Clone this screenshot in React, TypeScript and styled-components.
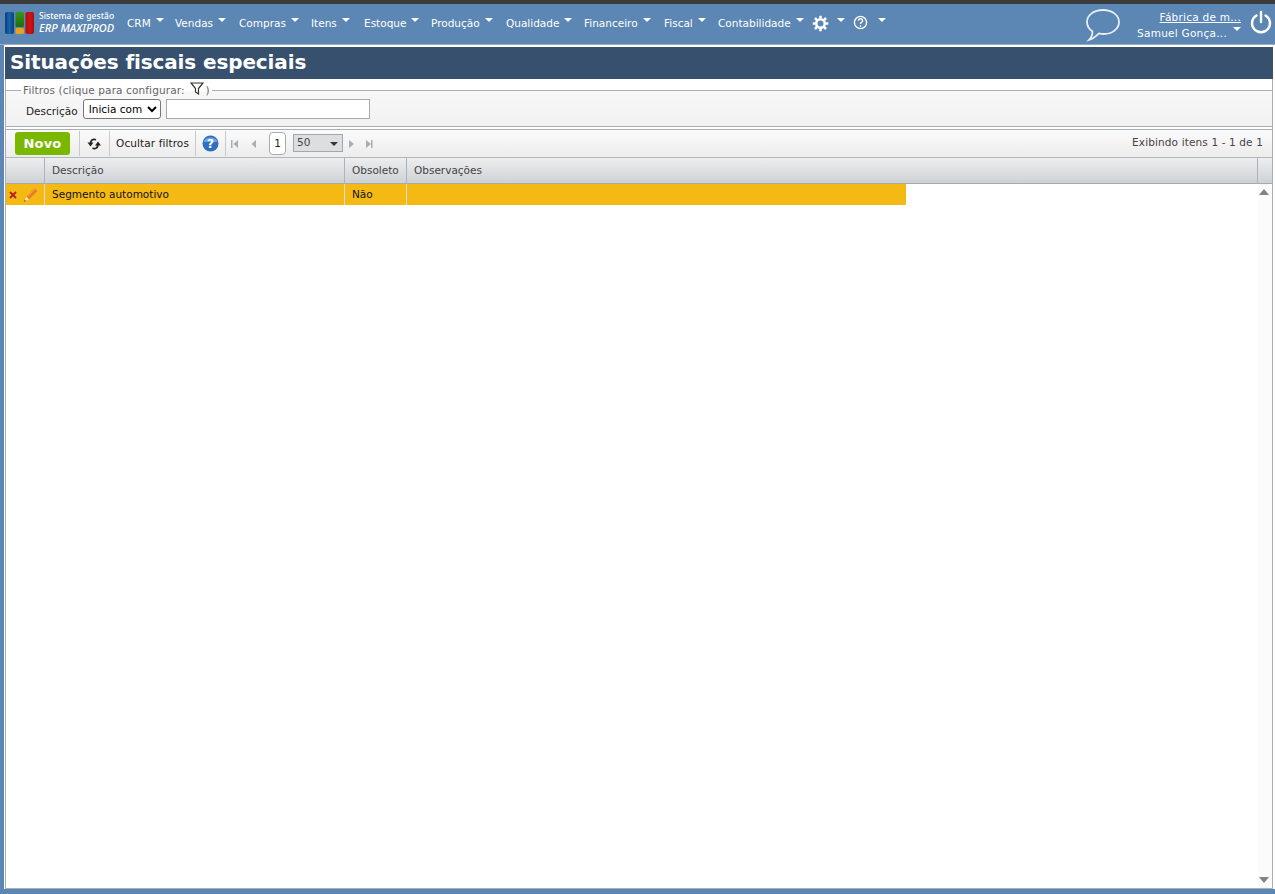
import React from "react";
import styled, { createGlobalStyle } from "styled-components";

const Global = createGlobalStyle`
  html, body { margin: 0; padding: 0; height: 100%; overflow: hidden; }
  body { background: #5c86b3; font-family: "DejaVu Sans", Verdana, sans-serif; font-size: 10.5px; color: #222; }
  #root { height: 100%; }
`;

const Page = styled.div`
  height: 894px;
  display: flex;
  flex-direction: column;
  border-top: 4px solid #3b3b3b;
  box-sizing: border-box;
`;
const NavBar = styled.header`
  height: 41px;
  box-sizing: border-box;
  border-bottom: 1px solid #a3acb5;
  flex: none;
  display: flex;
  align-items: flex-start;
  color: #fff;
  padding-left: 5px;
  position: relative;
`;
const Logo = styled.div`
  width: 122px;
  flex: none;
  display: flex;
  gap: 5px;
  padding-top: 7px;
`;
const LogoText = styled.div`
  display: flex;
  flex-direction: column;
  font-family: "Noto Sans", sans-serif;
  font-size: 8.6px;
  line-height: 12px;
  font-weight: 500;
  white-space: nowrap;
  margin-top: -1px;
  em { font-size: 11px; font-weight: 500; font-style: italic; }
`;
const Menu = styled.nav`
  display: flex;
  align-items: flex-start;
  padding-top: 12px;
`;
const MenuItem = styled.div<{ $w: number }>`
  width: ${(p) => p.$w}px;
  display: flex;
  flex: none;
  height: 14px;
  line-height: 14px;
  position: relative;
  white-space: nowrap;
`;
const Caret = styled.span<{ $x?: number }>`
  display: inline-block;
  width: 0;
  height: 0;
  border-left: 4.5px solid transparent;
  border-right: 4.5px solid transparent;
  border-top: 4.5px solid #fff;
  margin: 2px 0 0 ${(p) => p.$x ?? 5}px;
`;
const IconSlot = styled.span`
  display: inline-flex;
  width: 17px;
  height: 17px;
  margin-top: -1px;
`;
const UserBox = styled.div`
  position: absolute;
  top: 5px;
  right: 34px;
  width: 110px;
  text-align: right;
  line-height: 16px;
  letter-spacing: 0.25px;
  a { color: #fff; text-decoration: underline; display: block; }
`;
const UserLine = styled.div`
  display: flex;
  justify-content: flex-end;
  align-items: flex-start;
`;
const Chat = styled.svg`
  position: absolute;
  left: 1085px;
  top: 4px;
`;
const Power = styled.svg`
  position: absolute;
  left: 1250px;
  top: 6px;
`;
const Panel = styled.main`
  flex: 1;
  margin: 0 0 5px 4px;
  background: #fff;
  border-left: 1px solid #fff;
  border-top: 2px solid #fff;
  padding-right: 2px;
  display: flex;
  flex-direction: column;
  min-height: 0;
`;
const Title = styled.h1`
  margin: 0;
  height: 32px;
  line-height: 31px;
  background: #37506e;
  color: #fff;
  font-size: 20px;
  font-weight: 700;
  letter-spacing: -0.12px;
  padding-left: 5px;
  flex: none;
`;
const Content = styled.div`
  flex: 1;
  min-height: 0;
  display: flex;
  flex-direction: column;
  border-left: 1px solid #a9b0b5;
  border-bottom: 1px solid #a9b0b5;
  border-right: 1px solid #a9b0b5;
`;
const FilterWrap = styled.div`
  height: 50px;
  flex: none;
  box-sizing: border-box;
  padding-top: 5px;
`;
const Fieldset = styled.fieldset`
  margin: 0;
  height: 43px;
  box-sizing: border-box;
  border: none;
  border-top: 1px solid #a9b0b5;
  border-bottom: 1px solid #a9b0b5;
  padding: 0 0 0 20px;
  background: linear-gradient(#f8f8f8, #f1f1f1);
  display: flex;
  align-items: center;
  legend {
    margin-left: -5px;
    padding: 0 2px;
    color: #666;
    line-height: 12px;
    height: 12px;
    display: flex;
    align-items: center;
    white-space: nowrap;
    letter-spacing: 0.12px;
  }
  legend svg { margin: -3px 2px 0 5px; }
`;
const FilterRow = styled.div`
  display: flex;
  align-items: center;
  margin-top: -4px;
`;
const Label = styled.label`
  color: #222;
  margin: 3px 5px 0 0;
`;
const Select = styled.select`
  width: 78px;
  height: 20px;
  font: 10.5px "DejaVu Sans", sans-serif;
  background: #fff;
  border: 1px solid #767676;
  border-radius: 3px;
  color: #000;
  padding: 0 0 0 1px;
  margin-right: 5px;
`;
const TextInput = styled.input`
  width: 204px;
  height: 20px;
  box-sizing: border-box;
  border: 1px solid #a9a9a9;
  background: #fff;
`;
const Toolbar = styled.div`
  height: 28px;
  flex: none;
  box-sizing: border-box;
  border-top: 1px solid #a9b0b5;
  background: linear-gradient(#fbfbfb, #ececec);
  display: flex;
  align-items: center;
  padding-left: 9px;
  position: relative;
`;
const NewButton = styled.button`
  width: 55px;
  height: 23px;
  padding: 0;
  border: none;
  border-radius: 3px;
  background: #7ab800;
  color: #fff;
  font: 700 13px "DejaVu Sans", sans-serif;
  letter-spacing: 0.2px;
  margin-right: 9px;
`;
const Sep = styled.span`
  width: 1px;
  height: 25px;
  background: #c6cacd;
  flex: none;
`;
const ToolCell = styled.span<{ $w: number }>`
  width: ${(p) => p.$w}px;
  display: flex;
  align-items: center;
  justify-content: center;
  flex: none;
  white-space: nowrap;
  color: #222;
`;
const ToolText = styled.span`
  margin-top: -1px;
  letter-spacing: 0.1px;
`;
const PageBox = styled.span`
  width: 15px;
  height: 21px;
  border: 1px solid #aaa;
  border-radius: 4px;
  background: #fff;
  text-align: center;
  line-height: 21px;
  margin: 0 7px 0 12px;
  flex: none;
`;
const PageSize = styled.span`
  width: 50px;
  height: 18px;
  box-sizing: border-box;
  border: 1px solid #a3a8ac;
  background: #dcdfe1;
  color: #444;
  padding-left: 3px;
  line-height: 14px;
  display: flex;
  margin: -1px 1px 0 0;
  flex: none;
  position: relative;
  i {
    position: absolute;
    right: 4px;
    top: 7px;
    border-left: 4px solid transparent;
    border-right: 4px solid transparent;
    border-top: 4px solid #333;
  }
`;
const Count = styled.span`
  position: absolute;
  right: 9px;
  top: 6px;
  color: #444;
  letter-spacing: 0.13px;
`;
const Pager = styled.svg`
  flex: none;
  margin-left: 5px;
`;
const GridHead = styled.div`
  height: 27px;
  flex: none;
  display: grid;
  grid-template-columns: 39px 300px 62px 1fr 14px;
  box-sizing: border-box;
  background: linear-gradient(#eceeef, #cfd2d5);
  border-top: 1px solid #b2b7bb;
  border-bottom: 1px solid #a6abaf;
`;
const HeadCell = styled.div`
  border-right: 1px solid #aeb3b7;
  line-height: 25px;
  padding-left: 7px;
  color: #444;
  &:last-child { border-right: none; }
`;
const Body = styled.div`
  flex: 1;
  display: flex;
  position: relative;
  min-height: 0;
`;
const Rows = styled.div`
  width: 900px;
`;
const Row = styled.div`
  height: 21px;
  display: grid;
  grid-template-columns: 39px 300px 62px 1fr;
  background: #f5b914;
`;
const Cell = styled.div`
  border-right: 1px solid #dcdcdc;
  line-height: 21px;
  padding-left: 7px;
  color: #111;
  &:last-child { border-right: none; }
`;
const ActionCell = styled(Cell)`
  padding-left: 3px;
  display: flex;
  align-items: center;
  gap: 6px;
`;
const Scroll = styled.div`
  position: absolute;
  top: 0;
  right: 0;
  bottom: 0;
  width: 14px;
  background: #fbfbfb;
  i { position: absolute; left: 1px; border-left: 5px solid transparent; border-right: 5px solid transparent; }
  i:first-child { top: 5px; border-bottom: 6px solid #808080; }
  i:last-child { bottom: 5px; border-top: 6px solid #808080; }
`;

const menu: [string, number][] = [
  ["CRM", 48], ["Vendas", 64], ["Compras", 72], ["Itens", 53], ["Estoque", 67],
  ["Produção", 75], ["Qualidade", 78], ["Financeiro", 80], ["Fiscal", 54], ["Contabilidade", 94],
];

export default function App() {
  return (
    <Page>
      <Global />
      <NavBar>
        <Logo>
          <svg width="29" height="23" viewBox="0 0 29 23">
            <defs>
              <linearGradient id="lb" x1="0" x2="1" y1="0" y2="0">
                <stop offset="0" stopColor="#0a3f78" />
                <stop offset="0.5" stopColor="#1763ad" />
                <stop offset="1" stopColor="#0a3f78" />
              </linearGradient>
              <linearGradient id="lg" x1="0" x2="0" y1="0" y2="1">
                <stop offset="0" stopColor="#3a9614" />
                <stop offset="1" stopColor="#1f6d0c" />
              </linearGradient>
              <linearGradient id="lr" x1="0" x2="1" y1="0" y2="0">
                <stop offset="0" stopColor="#a80d0d" />
                <stop offset="0.5" stopColor="#d21414" />
                <stop offset="1" stopColor="#a80d0d" />
              </linearGradient>
            </defs>
            <rect x="0" y="1" width="9" height="22" rx="2" fill="url(#lb)" />
            <rect x="10.500" y="1" width="8.500" height="15" rx="1.500" fill="url(#lg)" />
            <rect x="10.500" y="17" width="8.500" height="6" rx="1.500" fill="#e5a21a" />
            <rect x="20.500" y="1" width="8.500" height="22" rx="2" fill="url(#lr)" />
          </svg>
          <LogoText>
            <span>Sistema de gestão</span>
            <em>ERP MAXIPROD</em>
          </LogoText>
        </Logo>
        <Menu>
          {menu.map(([t, w]) => (
            <MenuItem key={t} $w={w}>
              {t}
              <Caret />
            </MenuItem>
          ))}
          <MenuItem $w={41}>
            <IconSlot>
              <svg width="17" height="17" viewBox="0 0 24 24" fill="none" stroke="#fff" strokeWidth="3.600">
                <circle cx="12" cy="12" r="6" />
                <path d="M12 1v4M12 19v4M1 12h4M19 12h4M4.200 4.200l2.900 2.900M16.900 16.900l2.900 2.900M4.200 19.800l2.900-2.900M16.900 7.100l2.900-2.900" />
              </svg>
            </IconSlot>
            <Caret $x={8} />
          </MenuItem>
          <MenuItem $w={40}>
            <IconSlot>
              <svg width="15" height="15" viewBox="0 0 16 16" fill="none" stroke="#fff" strokeWidth="1.500">
                <circle cx="8" cy="8" r="6.500" />
                <path d="M5.800 6.200c0-3 4.400-3 4.400-.2 0 1.800-2.200 1.700-2.200 3.600" />
                <path d="M8 11v1.600" />
              </svg>
            </IconSlot>
            <Caret $x={8} />
          </MenuItem>
        </Menu>
        <Chat width="36" height="34" viewBox="0 0 36 34" fill="none" stroke="#e8eff6" strokeWidth="1.800">
          <path d="M18 2c9 0 16 5 16 12s-7 12-15 12c-2 0-4-.3-5-.6C11 28 8 31 4 32c2-2 3.500-5 3.500-8.500C4 21 2 18 2 14 2 7 9 2 18 2z" />
        </Chat>
        <UserBox>
          <a href="#">Fábrica de m...</a>
          <UserLine>
            Samuel Gonça...
            <Caret $x={6} />
          </UserLine>
        </UserBox>
        <Power width="22" height="24" viewBox="0 0 22 24" fill="none" stroke="#fff" strokeWidth="2.400" strokeLinecap="round">
          <path d="M11 2v10" />
          <path d="M6.500 5.500a9 9 0 1 0 9 0" />
        </Power>
      </NavBar>
      <Panel>
        <Title>Situações fiscais especiais</Title>
        <Content>
          <FilterWrap>
            <Fieldset>
              <legend>
                Filtros (clique para configurar:
                <svg width="14" height="13" viewBox="0 0 14 13" fill="none" stroke="#333" strokeWidth="1.200">
                  <path d="M1 1h12L8.500 6.500V12L5.500 10V6.500z" />
                </svg>
                )
              </legend>
              <FilterRow>
                <Label>Descrição</Label>
                <Select defaultValue="Inicia com">
                  <option>Inicia com</option>
                </Select>
                <TextInput />
              </FilterRow>
            </Fieldset>
          </FilterWrap>
          <Toolbar>
            <NewButton>Novo</NewButton>
            <Sep />
            <ToolCell $w={29}>
              <svg width="15" height="12" viewBox="0 0 15 12" fill="none" stroke="#222" strokeWidth="1.700">
                <path d="M9 1.800C6 .6 4 2 3.500 5" />
                <path d="M.5 4.500h6L3.500 8.500z" fill="#222" stroke="none" />
                <path d="M5.500 10.300c3 1 5-.3 5.500-3.300" />
                <path d="M8 7.500h6L11 3.500z" fill="#222" stroke="none" />
              </svg>
            </ToolCell>
            <Sep />
            <ToolCell $w={85}><ToolText>Ocultar filtros</ToolText></ToolCell>
            <Sep />
            <ToolCell $w={29}>
              <svg width="17" height="17" viewBox="0 0 17 17">
                <circle cx="8.500" cy="8.500" r="8" fill="#2f6fc0" />
                <path d="M1.500 7a7.200 6 0 0 1 14 0z" fill="#6ea3e2" />
                <text x="8.500" y="13" textAnchor="middle" fill="#fff" fontSize="12" fontWeight="700" fontFamily="DejaVu Sans, sans-serif">?</text>
              </svg>
            </ToolCell>
            <Sep />
            <Pager width="26" height="10" viewBox="0 0 26 10" fill="#a8adb2">
              <path d="M0 1h1.500v8H0zM7 1v8L2.500 5zM25 1v8l-4.500-4z" />
            </Pager>
            <PageBox>1</PageBox>
            <PageSize>
              50
              <i />
            </PageSize>
            <Pager width="24" height="10" viewBox="0 0 24 10" fill="#a8adb2">
              <path d="M0 1v8l5-4zM17 1v8l5-4zM22 1h1.500v8H22z" />
            </Pager>
            <Count>Exibindo itens 1 - 1 de 1</Count>
          </Toolbar>
          <GridHead>
            <HeadCell />
            <HeadCell>Descrição</HeadCell>
            <HeadCell>Obsoleto</HeadCell>
            <HeadCell>Observações</HeadCell>
            <HeadCell />
          </GridHead>
          <Body>
            <Rows>
              <Row>
                <ActionCell>
                  <svg width="8" height="8" viewBox="0 0 8 8" stroke="#b8231c" strokeWidth="2">
                    <path d="M1 1l6 6M7 1l-6 6" />
                  </svg>
                  <svg width="15" height="15" viewBox="0 0 15 15" fill="none">
                    <path d="M3.500 9.500 11.500 1 14.500 4 6 12.500z" fill="#ea7f22" />
                    <path d="M5 8.500 12 1.800" stroke="#f9b26a" strokeWidth="1" />
                    <path d="M3.500 9.500 6 12.500 1 14.500z" fill="#fbe3b8" />
                    <path d="M.8 14.800 1.800 12.800 3 14z" fill="#7a3b10" />
                  </svg>
                </ActionCell>
                <Cell>Segmento automotivo</Cell>
                <Cell>Não</Cell>
                <Cell />
              </Row>
            </Rows>
            <Scroll>
              <i />
              <i />
            </Scroll>
          </Body>
        </Content>
      </Panel>
    </Page>
  );
}
